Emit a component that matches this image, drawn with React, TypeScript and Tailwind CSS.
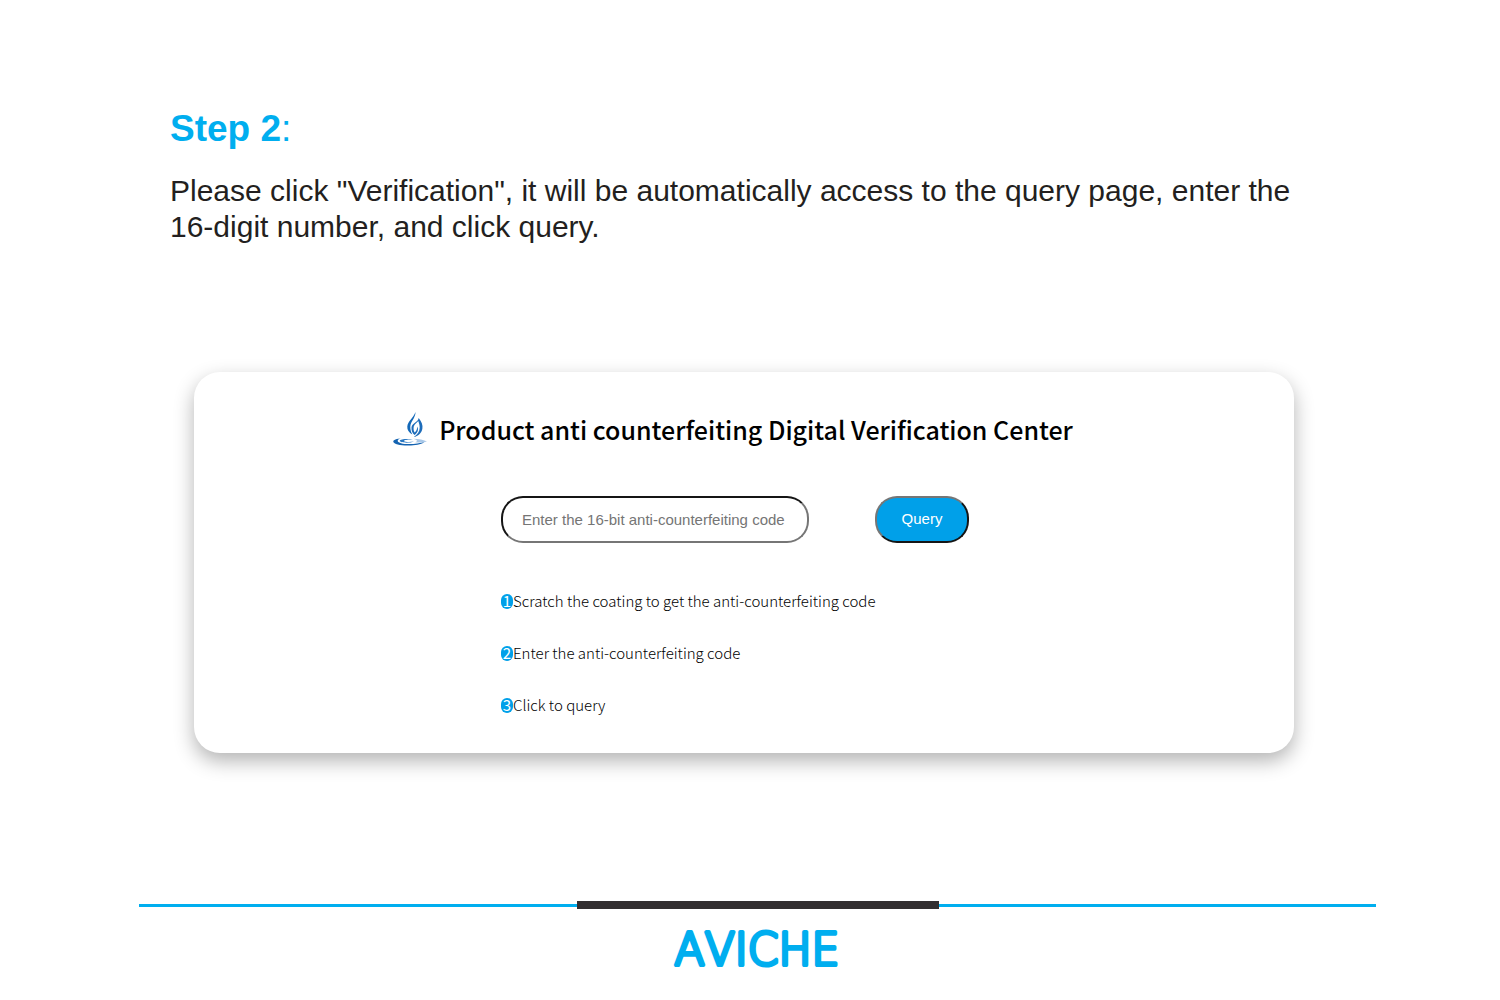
import { useState } from "react";

const STEPS = [
  "Scratch the coating to get the anti-counterfeiting code",
  "Enter the anti-counterfeiting code",
  "Click to query",
];

function FlameLogo() {
  return (
    <svg viewBox="0 0 34 34" className="h-[34px] w-[34px] shrink-0" aria-hidden="true">
      <path
        d="M22.500 0C22.500 6 17.500 9.500 17.300 14.500C17.200 18 18.200 20 19.300 22.500C16 20.500 14 18 14.300 14.500C14.800 9 20.500 6 22.500 0Z"
        fill="#1368b8"
      />
      <path
        d="M25.700 6C28.500 9.500 30 13 29.400 16.500C28.700 21 25 24.500 20.800 25C24.500 22.500 26.800 19.500 26.700 15.500C26.700 12.500 25.500 10 25.300 9C23.500 11 20.700 12.500 20.600 16C20.500 18 21 19.500 21.800 20.500C23.300 19 24.300 17 24.200 14.500C26 17.500 24.500 21 21.500 23C19.300 21 18.300 18.500 18.500 15.500C18.800 11 25 10.500 25.700 6Z"
        fill="#1d6cba"
      />
      <path
        d="M9 26.300C3.500 26.500 0 28 0.300 29.800C0.700 32.500 9 34 18 33.500C24 33.300 30 31.500 31.500 30C25 32 14 32.800 8 31.200C3 29.800 4 27 9 26.300Z"
        fill="#1463b1"
      />
      <path
        d="M20 27.500C14 26.500 7 27.200 6.800 28.800C6.800 30.800 16 31.500 21 29.500C17 30.200 11.500 30 11 28.900C11 27.900 15.500 27.300 20 27.500Z"
        fill="#2a78c2"
      />
      <path d="M20 26.800C26 27 31 28 34 29.500C29 30.600 25 30.600 22 30.300C25 29.500 25 28 20 26.800Z" fill="#a9c8e8" />
    </svg>
  );
}

export default function App() {
  const [code, setCode] = useState("");

  return (
    <main className="min-h-screen bg-white pt-[108px] font-['Liberation_Sans',Arial,sans-serif]">
      <header className="px-[170px]">
        <h1 className="text-[37px] leading-[42px] font-bold text-[#00aeef]">
          Step 2<span className="font-normal">:</span>
        </h1>
        <p className="mt-[23px] text-[30px] leading-9 text-[#231f20]">
          Please click "Verification", it will be automatically access to the query page, enter the
          16-digit number, and click query.
        </p>
      </header>

      <section className="mt-[127px] mr-[206px] ml-[194px] rounded-[26px] bg-white pt-9 pr-[18px] pb-9 shadow-[0_8px_20px_rgba(0,0,0,0.3)]">
        <div className="flex items-center justify-center gap-3 pr-1">
          <FlameLogo />
          <h2 className="font-['Noto_Sans_CJK_SC',sans-serif] text-[25px] leading-[42px] font-medium text-black">
            Product anti counterfeiting Digital Verification Center
          </h2>
        </div>

        <div className="mx-auto mt-[46px] w-[468px]">
          <form className="flex justify-between" onSubmit={(e) => e.preventDefault()}>
            <input
              type="text"
              aria-label="Anti-counterfeiting code"
              value={code}
              onChange={(e) => setCode(e.target.value)}
              placeholder="Enter the 16-bit anti-counterfeiting code"
              className="h-[47px] w-[308px] rounded-[22px] border-2 border-t-[#151515] border-r-[#767676] border-b-[#767676] border-l-[#151515] px-[19px] text-[15px] text-black placeholder:text-[#757575]"
            />
            <button
              type="submit"
              className="h-[47px] w-[94px] rounded-[22px] border-2 border-t-[#767676] border-r-[#151515] border-b-[#151515] border-l-[#767676] bg-[#00a0e9] text-[15px] text-white"
            >
              Query
            </button>
          </form>

          <ol className="mt-[46px] space-y-7 font-['Noto_Sans_CJK_SC',sans-serif] text-[15px] leading-6 font-light text-black">
            {STEPS.map((step, i) => (
              <li key={step} className="flex items-center">
                <span className="flex h-[15px] w-3 items-center justify-center rounded-full bg-[#00a0e9] font-normal text-white">
                  {i + 1}
                </span>
                {step}
              </li>
            ))}
          </ol>
        </div>
      </section>

      <footer className="mt-[148px] mr-[124px] ml-[139px]">
        <div className="flex items-center">
          <div className="h-[3px] flex-1 bg-[#00aeef]" />
          <div className="h-2 w-[362px] bg-[#322e30]" />
          <div className="h-[3px] flex-1 bg-[#00aeef]" />
        </div>
        <svg viewBox="0 0 240 60" className="mx-auto mt-2 h-[60px] w-[240px]" role="img" aria-label="AVICHE">
          <text
            x="119"
            y="48"
            textAnchor="middle"
            fill="#00aeef"
            stroke="#00aeef"
            strokeWidth="4"
            strokeLinejoin="round"
            className="font-['DejaVu_Sans',sans-serif] text-[44px] font-extralight [font-kerning:none]"
          >
            AVICHE
          </text>
        </svg>
      </footer>
    </main>
  );
}
